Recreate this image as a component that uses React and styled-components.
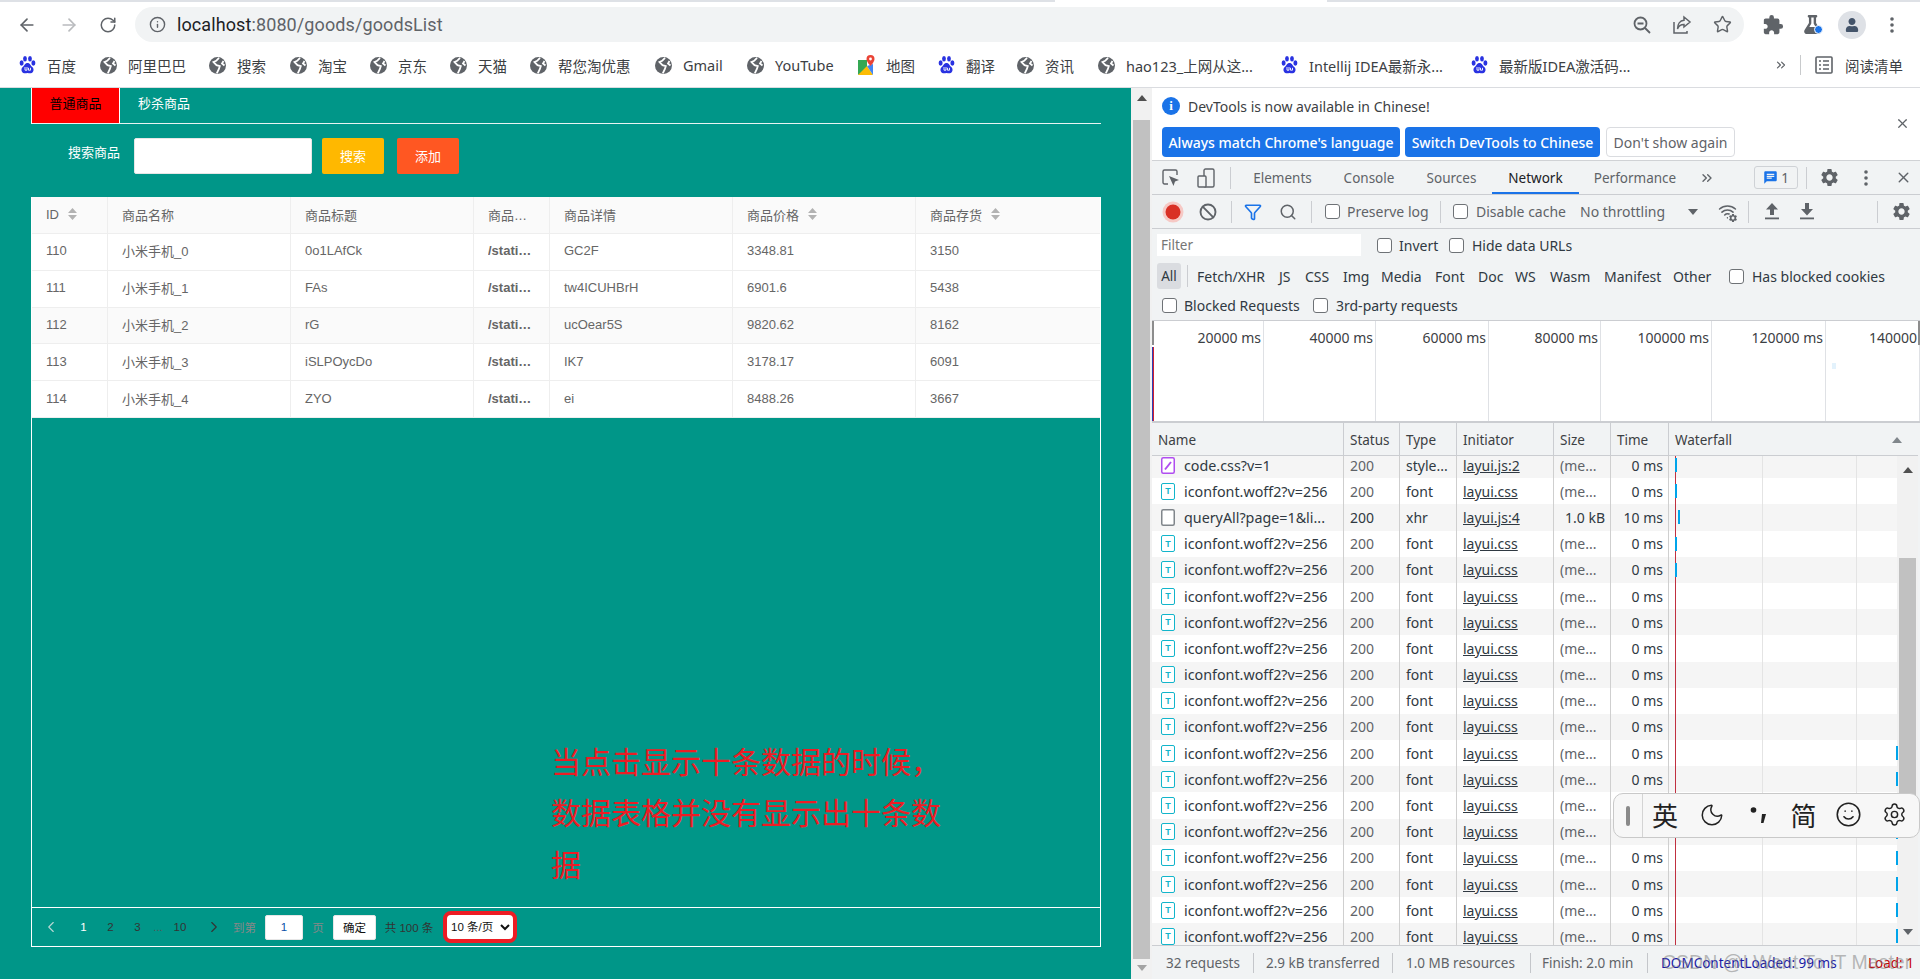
import React from 'react';
import styled, { createGlobalStyle } from 'styled-components';
import { ArrowLeft, ArrowRight, RotateCw, Info, Star, Ban, Search, Filter, X, ChevronsRight, Moon, Smile, Settings, Wifi, ChevronLeft, ChevronRight } from 'lucide-react';
import { MdSettings, MdChat, MdExtension } from 'react-icons/md';
import { FaFlask, FaUser } from 'react-icons/fa';

const Global = createGlobalStyle`
  html, body { margin: 0; padding: 0; height: 979px; overflow: hidden; background: #fff; }
  * { box-sizing: border-box; }
  body { font-family: "Noto Sans", "Noto Sans CJK SC", sans-serif; }
`;

const Shell = styled.div`width: 1920px; height: 979px; display: flex; flex-direction: column; overflow: hidden;`;

/* browser chrome */
const TabStrip = styled.div`height: 2px; background: #dee1e6; flex: none;`;
const ActiveTabEdge = styled.div`height: 2px; width: 272px; margin-left: 1055px; background: #fff;`;
const Toolbar = styled.div`height: 41px; flex: none; display: flex; align-items: center; padding: 5px 8px 1px 6px;`;
const Slot = styled.div`width: ${p => p.$w}px; flex: none; display: flex; align-items: center; justify-content: center; color: ${p => p.$c || '#5f6368'}; position: relative; padding-left: ${p => p.$pl || 0}px;`;
const Omnibox = styled.div`flex: 1; height: 35px; margin: 0 9px; background: #f1f3f4; border-radius: 18px; display: flex; align-items: center; padding-left: 14px;`;
const Url = styled.div`flex: 1; margin-left: 11px; font: 18px Roboto, sans-serif; color: #5f6368; white-space: nowrap; letter-spacing: .1px; b { font-weight: 400; color: #202124; }`;
const Dot = styled.span`position: absolute; right: 9px; bottom: 0; width: 9px; height: 9px; border-radius: 50%; background: #1a73e8; border: 1px solid #fff;`;
const Avatar = styled.div`width: 28px; height: 28px; border-radius: 50%; background: #dee1e6; display: flex; align-items: center; justify-content: center; color: #44546a;`;
const Bookmarks = styled.div`height: 45px; flex: none; display: flex; align-items: center; padding: 0 17px 0 19px; border-bottom: 1px solid #dadce0; font-size: 14.5px; color: #3c4043;`;
const Bookmark = styled.div`width: ${p => p.$w}px; flex: none; display: flex; align-items: center; gap: 11px; white-space: nowrap;`;
const BarEnd = styled.div`margin-left: auto; display: flex; align-items: center; color: #5f6368;`;
const BarDivider = styled.div`width: 1px; height: 20px; background: #c8cacc; margin: 0 14px 0 12px;`;
const ReadingList = styled.div`display: flex; align-items: center; gap: 12px; color: #3c4043;`;

/* main */
const Main = styled.div`flex: 1; min-height: 0; display: flex;`;
const Page = styled.div`width: 1131px; flex: none; background: #009688; padding-left: 31px; display: flex; flex-direction: column; font-family: "Liberation Sans", "Noto Sans CJK SC", sans-serif; font-size: 13px; color: #666;`;
const PageTabs = styled.div`width: 1070px; height: 36px; flex: none; display: flex; border-bottom: 1px solid #e8f3f2; border-left: 1px solid #fff;`;
const PageTab = styled.div`width: ${p => p.$w}px; height: 35px; padding-bottom: 6px; display: flex; align-items: center; justify-content: center; background: ${p => p.$on ? '#f00' : 'transparent'}; color: ${p => p.$on ? '#000' : '#fff'}; border-right: ${p => p.$on ? '1px solid #fff' : 'none'};`;
const SearchRow = styled.div`height: 73px; flex: none; padding-top: 14px; display: flex; align-items: flex-start;`;
const SearchLabel = styled.label`width: 89px; margin-right: 14px; text-align: right; color: #fff; line-height: 30px;`;
const SearchInput = styled.input`width: 178px; height: 36px; margin: 0 10px 0 0; border: 1px solid #e6e6e6; border-radius: 2px; background: #fff; outline: none;`;
const ActionButton = styled.button`width: 62px; height: 36px; margin-right: 13px; padding: 0 0 2px; border: 0; border-radius: 2px; background: ${p => p.$bg}; color: #fff; font: inherit;`;
const TableBox = styled.div`width: 1070px; height: 750px; flex: none; display: flex; flex-direction: column; border: 1px solid #fff; border-top: 0;`;
const GridRow = styled.div`display: grid; height: ${p => p.$h || 36.8}px; flex: none; grid-template-columns: 76px 183px 183px 76px 183px 183px 1fr; background: ${p => p.$alt ? '#fafafa' : '#fff'}; border-bottom: 1px solid #eee;`;
const Cell = styled.div`display: flex; align-items: center; gap: 9px; padding: 0 14px 2px; min-width: 0; border-right: 1px solid #eee; font-weight: ${p => p.$bold ? 700 : 400}; white-space: nowrap; &:last-child { border-right: 0; }`;
const Clip = styled.span`overflow: hidden; text-overflow: ellipsis;`;
const TableEmpty = styled.div`flex: 1; padding: 317px 0 0 519px; min-height: 0;`;
const Note = styled.div`width: 395px; font-size: 30px; line-height: 51.5px; color: #ed1c24; font-family: "Noto Sans CJK SC", sans-serif;`;
const Pager = styled.div`height: 39px; flex: none; border-top: 1px solid #fff; display: flex; align-items: center; font-size: 11.5px; color: #333;`;
const PagerCell = styled.div`width: ${p => p.$w}px; flex: none; display: flex; justify-content: ${p => p.$start ? 'flex-start' : 'center'}; align-items: center; color: ${p => p.$c || '#333'}; margin-left: ${p => p.$ml || 0}px; white-space: nowrap;`;
const PagerInput = styled.input`width: 38px; height: 25px; margin-left: 9px; border: 1px solid #e6e6e6; border-radius: 2px; text-align: center; font: inherit; color: #0b4fa8; background: #fff;`;
const PagerButton = styled.button`width: 43px; height: 25px; border: 1px solid #e6e6e6; border-radius: 2px; background: #fff; color: #111; font: inherit; padding: 0;`;
const PageSelect = styled.select`width: 74px; height: 32px; margin: 0 0 0 10px; border: 4px solid #ed1c24; border-radius: 8px; background: #fff; color: #111; font: 11.5px "Liberation Sans", "Noto Sans CJK SC", sans-serif; padding: 0;`;

const PageScroll = styled.div`width: 21px; flex: none; background: #f1f1f1; display: flex; flex-direction: column; align-items: center; padding: 7px 2px 0 2px;`;
const ArrowUp = styled.i`display: block; flex: none; width: 0; height: 0; border: 5px solid transparent; border-top: 0; border-bottom: 6px solid ${p => p.$c || '#505050'}; `;
const ArrowDown = styled.i`display: block; flex: none; width: 0; height: 0; border: 5px solid transparent; border-bottom: 0; border-top: 6px solid ${p => p.$c || '#a3a3a3'}; `;
const PageThumb = styled.div`width: 17px; height: 839px; margin-top: 19px; background: #c1c1c1; flex: none; margin-bottom: 6px;`;

/* devtools */
const Dev = styled.div`flex: 1; min-width: 0; position: relative; display: flex; flex-direction: column; font-size: 13.5px; color: #303942; background: #f1f3f4;`;
const InfoBar = styled.div`height: 73px; flex: none; background: #fff; border-bottom: 1px solid #d0d2d5; padding: 8px 0 0 10px; position: relative;`;
const InfoLine = styled.div`display: flex; align-items: center; gap: 8px; height: 20px; font-size: 14px; color: #3c4043;`;
const InfoDot = styled.div`width: 18px; height: 18px; border-radius: 50%; background: #1a73e8; color: #fff; font: bold 13px "Liberation Serif", serif; display: flex; align-items: center; justify-content: center;`;
const InfoButtons = styled.div`display: flex; gap: 5px; margin-top: 11px;`;
const InfoBtn = styled.div`width: ${p => p.$w}px; height: 30px; border-radius: 4px; display: flex; align-items: center; justify-content: center; white-space: nowrap; font-size: 14px; font-weight: ${p => p.$plain ? 400 : 500}; background: ${p => p.$plain ? '#fff' : '#1a73e8'}; color: ${p => p.$plain ? '#5f6368' : '#fff'}; border: ${p => p.$plain ? '1px solid #dadce0' : '0'}; margin-left: ${p => p.$plain ? 1 : 0}px;`;
const InfoClose = styled.div`position: absolute; right: 10px; top: 28px; color: #5f6368; display: flex;`;
const Bar = styled.div`height: ${p => p.$h}px; flex: none; display: flex; align-items: center; padding-left: ${p => p.$pl || 0}px; border-bottom: ${p => p.$line ? '1px solid #cbcdd1' : 'none'}; white-space: nowrap;`;
const VDivider = styled.div`width: 1px; height: 22px; flex: none; background: #cbcdd1; margin-left: ${p => p.$ml || 0}px; margin-right: ${p => p.$mr || 0}px;`;
const DevTab = styled.div`width: ${p => p.$w}px; flex: none; height: 100%; display: flex; align-items: center; justify-content: center; color: ${p => p.$on ? '#202124' : '#5f6368'}; border-bottom: ${p => p.$on ? '2px solid #1a73e8' : '0'}; padding-top: ${p => p.$on ? 2 : 0}px;`;
const IssueBtn = styled.div`width: 44px; height: 23px; margin-left: auto; border: 1px solid #cfd2d6; border-radius: 3px; display: flex; align-items: center; justify-content: center; gap: 3px; color: #5f6368;`;
const Check = styled.input.attrs({ type: 'checkbox', readOnly: true })`appearance: none; width: 15px; height: 15px; margin: 0 ${p => p.$mr ?? 7}px 0 ${p => p.$ml ?? 0}px; flex: none; background: #fff; border: 1px solid #6e7276; border-radius: 3px;`;
const Text = styled.span`flex: none; width: ${p => p.$w ? p.$w + 'px' : 'auto'}; font-size: 14px; color: ${p => p.$c || '#303942'}; margin-left: ${p => p.$ml || 0}px;`;
const FilterInput = styled.div`width: 204px; height: 22px; flex: none; background: #fff; color: #757575; padding-left: 4px; line-height: 22px; margin-right: 16px;`;
const AllChip = styled.div`width: 24px; height: 26px; flex: none; background: #dadce0; border-radius: 3px; display: flex; align-items: center; justify-content: center;`;
const Timeline = styled.div`height: 103px; flex: none; background: #fff; display: flex; position: relative; border-bottom: 2px solid #cbcdd1; border-top: 1px solid #cbcdd1;`;
const Tick = styled.div`width: ${p => p.$w}px; flex: none; border-right: 1px solid #dfe1e5; text-align: right; padding: 7px 2px 0 0; font-size: 14px; color: #3c4043; white-space: nowrap; overflow: hidden; &:last-of-type { border-right: 0; flex: 1; padding-right: 8px; }`;
const HandleL = styled.div`position: absolute; left: 0; top: 0; width: 2px; height: 24px; background: #8d8d8d;`;
const HandleR = styled.div`position: absolute; right: 0; top: 0; width: 2px; height: 24px; background: #8d8d8d;`;
const LoadMark = styled.div`position: absolute; left: 0; top: 26px; bottom: 0; width: 2px; background: linear-gradient(90deg, #2f3fb5 50%, #d02030 50%);`;
const Speck = styled.div`position: absolute; left: 680px; top: 42px; width: 4px; height: 6px; background: #e3f2fc;`;
const Head = styled.div`height: 33px; flex: none; margin-right: 2px; display: grid; grid-template-columns: 192px 56px 57px 97px 57px 58px 1fr; border-bottom: 1px solid #cbcdd1; background: #f1f3f4;`;
const HeadCell = styled.div`display: flex; align-items: center; justify-content: space-between; padding: 1px 16px 0 6px; border-right: 1px solid #cbcdd1; color: #3c4043; &:last-child { border-right: 0; }`;
const Body = styled.div`flex: 1; min-height: 0; margin-right: 2px; display: flex; background: #fff; overflow: hidden;`;
const Rows = styled.div`flex: 1; min-width: 0; margin-top: -4px;`;
const Row = styled.div`height: 26.2px; display: grid; grid-template-columns: 192px 56px 57px 97px 57px 58px 1fr; background: ${p => p.$alt ? '#f5f5f5' : '#fff'};`;
const Td = styled.div`display: flex; align-items: center; justify-content: ${p => p.$right ? 'flex-end' : 'flex-start'}; gap: 9px; padding: 0 5px 0 6px; border-right: 1px solid #cfcfcf; overflow: hidden; white-space: nowrap; font-size: ${p => p.$fs || 14}px; color: ${p => p.$c || '#303942'}; text-decoration: ${p => p.$u ? 'underline' : 'none'};`;
const FileIcon = styled.span`width: 14px; height: 17px; margin-left: 3px; flex: none; border: 1.5px solid ${p => p.$c}; border-radius: 2px; color: ${p => p.$c}; font: bold 9px "Liberation Sans", sans-serif; display: flex; align-items: center; justify-content: center; background: #fff;`;
const Fall = styled.div`position: relative; background-image: linear-gradient(#e4e4e4, #e4e4e4), linear-gradient(#e4e4e4, #e4e4e4), linear-gradient(#c03040, #c03040); background-size: 1px 100%, 1px 100%, 1px 100%; background-repeat: no-repeat; background-position: 93px 0, 187px 0, 6px 0;`;
const WaterBar = styled.span`position: absolute; left: ${p => p.$x}px; top: 6px; width: 2px; height: 14px; background: #00a4ea;`;
const DevScroll = styled.div`width: 21px; flex: none; background: #f1f1f1; display: flex; flex-direction: column; align-items: center; padding: 11px 0 10px;`;
const DevThumb = styled.div`width: 17px; height: 277px; margin-top: 85px; background: #c1c1c1; flex: none;`;
const Footer = styled.div`height: 34px; flex: none; display: flex; align-items: center; border-top: 1px solid #cbcdd1; background: #f1f3f4; font-size: 13.5px; color: #5f6368; position: relative;`;
const Stat = styled.div`width: ${p => p.$w}px; flex: none; height: 20px; line-height: 20px; padding-left: ${p => p.$pl}px; border-right: ${p => p.$nl ? '0' : '1px solid #c4c6ca'}; color: ${p => p.$c || '#5f6368'}; white-space: nowrap; overflow: hidden;`;
const Watermark = styled.div`position: absolute; left: 510px; top: 5px; font: 19.5px "Liberation Sans", sans-serif; color: rgba(120,120,120,.5); white-space: nowrap; pointer-events: none;`;
const Ime = styled.div`position: absolute; left: 461px; top: 705px; width: 307px; height: 45px; background: #f7f7f7; border: 1px solid #c9c9c9; border-radius: 10px; display: flex; align-items: center; color: #222;`;
const ImeGrip = styled.div`width: 29px; height: 100%; flex: none; display: flex; align-items: center; justify-content: center; border-right: 1px solid #d4d4d4; &::before { content: ""; width: 4px; height: 20px; border-radius: 2px; background: #8a8a8a; }`;
const ImeSlot = styled.div`width: ${p => p.$w}px; flex: none; display: flex; justify-content: center; align-items: center; padding-bottom: 2px; font: 26px "Noto Sans CJK SC", sans-serif;`;
const WifiGear = styled.span`position: absolute; right: 10px; bottom: -2px; display: flex; background: #f1f3f4; border-radius: 50%;`;

/* small drawings */
const Paw = () => (
  <svg width="17" height="18" viewBox="0 0 17 18" fill="#2932e1">
    <ellipse cx="2.6" cy="7" rx="2" ry="2.7" /><ellipse cx="6" cy="2.8" rx="1.9" ry="2.7" /><ellipse cx="11" cy="2.8" rx="1.9" ry="2.7" /><ellipse cx="14.4" cy="7" rx="2" ry="2.7" />
    <path d="M8.5 7C6 7 5.7 9.4 4 10.8 2.4 12.2 2 14 3 15.8c1 1.8 3 1.8 5.5 1.2 2.5.6 4.5.6 5.5-1.2 1-1.8.6-3.6-1-5C11.3 9.4 11 7 8.5 7z" />
    <path d="M6 11v3.2h2V11M9.5 11.8v2.4h2v-2.4" stroke="#fff" strokeWidth=".9" fill="none" />
  </svg>
);
const Globe = () => (
  <svg width="17" height="17" viewBox="0 0 17 17">
    <circle cx="8.5" cy="8.5" r="8.5" fill="#5f6368" />
    <path d="M10 .8 7.200 3.800 4.500 5l3 3.200 3.300 1-1 3-2 4.200M14.500 4l-1.500 2.500 2.500 2" stroke="#fff" strokeWidth="1.8" fill="none" />
  </svg>
);
const Maps = () => (
  <svg width="17" height="20" viewBox="0 0 17 20">
    <path d="M0 5h9v9L0 20z" fill="#34a853" /><path d="M0 20 9 11l6 9z" fill="#fbbc04" /><path d="M9 11l6 9V9z" fill="#4285f4" />
    <path d="M12.500 0a4 4 0 0 0-4 4c0 3 4 7 4 7s4-4 4-7a4 4 0 0 0-4-4z" fill="#ea4335" /><circle cx="12.5" cy="4" r="1.4" fill="#fff" />
  </svg>
);
const ZoomOutIcon = () => (
  <svg width="20" height="20" viewBox="0 0 20 20" fill="none" stroke="#5f6368" strokeWidth="1.8"><circle cx="8.5" cy="8.5" r="6" /><path d="M5.500 8.500h6M13 13l5 5" /></svg>
);
const ShareIcon = () => (
  <svg width="20" height="20" viewBox="0 0 20 20" fill="none" stroke="#5f6368" strokeWidth="1.5"><path d="M2 7v11h13v-2" /><path d="M12 2l6 5-6 5V9.500C8.500 9.500 6.500 11 5.500 14c0-5 2.500-8.500 6.500-8.800z" /></svg>
);
const Dots = ({ c = '#5f6368' }) => (
  <svg width="4" height="16" viewBox="0 0 4 16" fill={c}><circle cx="2" cy="2" r="1.8" /><circle cx="2" cy="8" r="1.8" /><circle cx="2" cy="14" r="1.8" /></svg>
);
const ListIcon = () => (
  <svg width="18" height="18" viewBox="0 0 18 18" fill="none" stroke="#5f6368" strokeWidth="1.6"><rect x="1" y="1" width="16" height="16" rx="1" /><path d="M4 5h2M8 5h6M4 9h2M8 9h6M4 13h2M8 13h6" /></svg>
);
const Inspect = () => (
  <svg width="18" height="18" viewBox="0 0 18 18" fill="none" stroke="#5f6368" strokeWidth="1.4"><path d="M6 15H2.500A1.500 1.500 0 0 1 1 13.500v-11A1.500 1.500 0 0 1 2.500 1h11A1.500 1.500 0 0 1 15 2.500V6" /><path d="M7 7l10 4-4 1.500L11.500 17z" fill="#5f6368" stroke="none" /></svg>
);
const Device = () => (
  <svg width="18" height="20" viewBox="0 0 18 20" fill="none" stroke="#5f6368" strokeWidth="1.4"><rect x="7" y="1" width="10" height="18" rx="1.5" /><rect x="1" y="8" width="8" height="11" rx="1" fill="#f1f3f4" /></svg>
);
const Record = () => (
  <svg width="22" height="22" viewBox="0 0 22 22"><circle cx="11" cy="11" r="10.5" fill="#f6c9c5" /><circle cx="11" cy="11" r="7.5" fill="#d93025" /></svg>
);
const Up = () => (
  <svg width="14" height="17" viewBox="0 0 14 17" fill="#5f6368"><path d="M7 0l6 6.500H9V12H5V6.500H1z" /><rect x="0" y="14.5" width="14" height="1.8" /></svg>
);
const Down = () => (
  <svg width="14" height="17" viewBox="0 0 14 17" fill="#5f6368"><path d="M7 12.500 1 6h4V0h4v6h4z" /><rect x="0" y="14.5" width="14" height="1.8" /></svg>
);
const Sort = () => (
  <svg width="9" height="12" viewBox="0 0 9 12" fill="#b2b2b2"><path d="M4.500 0 9 5H0zM0 7h9l-4.500 5z" /></svg>
);
const Pencil = () => (
  <svg width="14" height="17" viewBox="0 0 14 17" fill="none" style={{ marginLeft: 3, flex: 'none' }}><rect x=".75" y=".75" width="12.5" height="15.5" rx="1.5" stroke="#b04df0" strokeWidth="1.5" fill="#fff" /><path d="M4 12.500 10 5" stroke="#b04df0" strokeWidth="2" /></svg>
);
const BlankFile = () => (
  <svg width="14" height="17" viewBox="0 0 14 17" fill="none" style={{ marginLeft: 3, flex: 'none' }}><rect x=".75" y=".75" width="12.5" height="15.5" rx="1.5" stroke="#80868b" strokeWidth="1.5" fill="#fff" /></svg>
);
const Comma = () => (
  <svg width="18" height="22" viewBox="0 0 18 22" fill="#222"><circle cx="3.5" cy="6" r="2.8" /><path d="M12 10h4l-2.500 9H11z" /></svg>
);

const marks = [
  ['百度', 81, <Paw />], ['阿里巴巴', 109, <Globe />], ['搜索', 81, <Globe />], ['淘宝', 80, <Globe />], ['京东', 80, <Globe />],
  ['天猫', 80, <Globe />], ['帮您淘优惠', 125, <Globe />], ['Gmail', 92, <Globe />], ['YouTube', 111, <Globe />], ['地图', 80, <Maps />],
  ['翻译', 79, <Paw />], ['资讯', 81, <Globe />], ['hao123_上网从这...', 183, <Globe />], ['Intellij IDEA最新永...', 190, <Paw />], ['最新版IDEA激活码...', 180, <Paw />],
];

const goods = [
  ['110', '小米手机_0', '0o1LAfCk', 'GC2F', '3348.81', '3150'],
  ['111', '小米手机_1', 'FAs', 'tw4ICUHBrH', '6901.6', '5438'],
  ['112', '小米手机_2', 'rG', 'ucOear5S', '9820.62', '8162'],
  ['113', '小米手机_3', 'iSLPOycDo', 'IK7', '3178.17', '6091'],
  ['114', '小米手机_4', 'ZYO', 'ei', '8488.26', '3667'],
];

const requests = Array.from({ length: 19 }, (_, i) => {
  if (i === 0) return { n: 'code.css?v=1', k: 'css', t: 'style...', by: 'layui.js:2', s: '(me...', ms: '0 ms', bar: 6 };
  if (i === 2) return { n: 'queryAll?page=1&li...', k: 'xhr', t: 'xhr', by: 'layui.js:4', s: '1.0 kB', ms: '10 ms', bar: 9, dark: true };
  return { n: 'iconfont.woff2?v=256', k: 'font', t: 'font', by: 'layui.css', s: '(me...', ms: '0 ms', bar: i < 5 ? 6 : i >= 11 ? 227 : null };
});

const ticks = [['20000 ms', 112], ['40000 ms', 112], ['60000 ms', 113], ['80000 ms', 112], ['100000 ms', 111], ['120000 ms', 114], ['140000', 94]];
const tabs = [['Elements', 89], ['Console', 84], ['Sources', 81], ['Network', 87, true], ['Performance', 112]];
const kinds = [['Fetch/XHR', 82], ['JS', 26], ['CSS', 38], ['Img', 38], ['Media', 54], ['Font', 43], ['Doc', 37], ['WS', 35], ['Wasm', 54], ['Manifest', 69], ['Other', 56]];

export default function App() {
  return (
    <Shell>
      <Global />
      <TabStrip><ActiveTabEdge /></TabStrip>
      <Toolbar>
        <Slot $w={42}><ArrowLeft size={20} /></Slot>
        <Slot $w={42} $c="#b9bbbe"><ArrowRight size={20} /></Slot>
        <Slot $w={36}><RotateCw size={18} /></Slot>
        <Omnibox>
          <Info size={17} color="#5f6368" />
          <Url><b>localhost</b>:8080/goods/goodsList</Url>
          <Slot $w={40}><ZoomOutIcon /></Slot>
          <Slot $w={40}><ShareIcon /></Slot>
          <Slot $w={40}><Star size={19} strokeWidth={1.8} /></Slot>
          <Slot $w={2} />
        </Omnibox>
        <Slot $w={39}><MdExtension size={22} /></Slot>
        <Slot $w={40}><FaFlask size={19} /><Dot /></Slot>
        <Slot $w={40}><Avatar><FaUser size={14} /></Avatar></Slot>
        <Slot $w={40}><Dots /></Slot>
      </Toolbar>
      <Bookmarks>
        {marks.map(([t, w, icon]) => <Bookmark key={t} $w={w}>{icon}<span>{t}</span></Bookmark>)}
        <BarEnd>
          <ChevronsRight size={14} />
          <BarDivider />
          <ReadingList><ListIcon /><span>阅读清单</span></ReadingList>
        </BarEnd>
      </Bookmarks>
      <Main>
        <Page>
          <PageTabs>
            <PageTab $w={88} $on>普通商品</PageTab>
            <PageTab $w={88}>秒杀商品</PageTab>
          </PageTabs>
          <SearchRow>
            <SearchLabel>搜索商品</SearchLabel>
            <SearchInput />
            <ActionButton $bg="#FFB800">搜索</ActionButton>
            <ActionButton $bg="#FF5722">添加</ActionButton>
          </SearchRow>
          <TableBox>
            <GridRow $alt $h={37}>
              <Cell>ID <Sort /></Cell>
              <Cell>商品名称</Cell>
              <Cell>商品标题</Cell>
              <Cell><Clip>商品图片地址</Clip></Cell>
              <Cell>商品详情</Cell>
              <Cell>商品价格 <Sort /></Cell>
              <Cell>商品存货 <Sort /></Cell>
            </GridRow>
            {goods.map((g, i) => (
              <GridRow key={g[0]} $alt={i === 2}>
                <Cell>{g[0]}</Cell>
                <Cell>{g[1]}</Cell>
                <Cell>{g[2]}</Cell>
                <Cell $bold><Clip>/static/img/xiaomi.png</Clip></Cell>
                <Cell>{g[3]}</Cell>
                <Cell>{g[4]}</Cell>
                <Cell>{g[5]}</Cell>
              </GridRow>
            ))}
            <TableEmpty>
              <Note>当点击显示十条数据的时候，数据表格并没有显示出十条数据</Note>
            </TableEmpty>
            <Pager>
              <PagerCell $w={38} $c="#b9d8d4"><ChevronLeft size={18} strokeWidth={1.5} /></PagerCell>
              <PagerCell $w={27} $c="#fff">1</PagerCell>
              <PagerCell $w={27}>2</PagerCell>
              <PagerCell $w={27}>3</PagerCell>
              <PagerCell $w={14} $c="#555">...</PagerCell>
              <PagerCell $w={30}>10</PagerCell>
              <PagerCell $w={38}><ChevronRight size={18} strokeWidth={1.5} /></PagerCell>
              <PagerCell $w={23} $c="#888">到第</PagerCell>
              <PagerInput defaultValue="1" />
              <PagerCell $w={30} $c="#888">页</PagerCell>
              <PagerButton>确定</PagerButton>
              <PagerCell $w={48} $ml={9}>共 100 条</PagerCell>
              <PageSelect defaultValue="10"><option value="10">10 条/页</option></PageSelect>
            </Pager>
          </TableBox>
        </Page>
        <PageScroll>
          <ArrowUp />
          <PageThumb />
          <ArrowDown />
        </PageScroll>
        <Dev>
          <InfoBar>
            <InfoLine><InfoDot>i</InfoDot><span>DevTools is now available in Chinese!</span></InfoLine>
            <InfoButtons>
              <InfoBtn $w={238}>Always match Chrome's language</InfoBtn>
              <InfoBtn $w={195}>Switch DevTools to Chinese</InfoBtn>
              <InfoBtn $w={129} $plain>Don't show again</InfoBtn>
            </InfoButtons>
            <InfoClose><X size={15} /></InfoClose>
          </InfoBar>
          <Bar $h={34} $line>
            <Slot $w={38}><Inspect /></Slot>
            <Slot $w={32}><Device /></Slot>
            <VDivider $ml={8} $mr={7} />
            {tabs.map(([t, w, on]) => <DevTab key={t} $w={w} $on={on}>{t}</DevTab>)}
            <Slot $w={32}><ChevronsRight size={16} /></Slot>
            <IssueBtn><MdChat size={15} color="#1a73e8" /><span>1</span></IssueBtn>
            <VDivider $ml={8} />
            <Slot $w={44}><MdSettings size={21} /></Slot>
            <Slot $w={30}><Dots /></Slot>
            <Slot $w={39} $pl={5}><X size={17} /></Slot>
          </Bar>
          <Bar $h={34} $line>
            <Slot $w={42}><Record /></Slot>
            <Slot $w={28}><Ban size={18} strokeWidth={2.5} /></Slot>
            <VDivider $ml={9} />
            <Slot $w={42}><Filter size={18} color="#1a73e8" strokeWidth={2.2} /></Slot>
            <Slot $w={28}><Search size={18} /></Slot>
            <VDivider $ml={9} $mr={13} />
            <Check />
            <Text $w={93} $c="#5f6368">Preserve log</Text>
            <VDivider $mr={12} />
            <Check $mr={8} />
            <Text $w={104} $c="#5f6368">Disable cache</Text>
            <Text $w={108} $c="#5f6368">No throttling</Text>
            <ArrowDown $c="#5f6368" />
            <Slot $w={50} $pl={8}><Wifi size={19} /><WifiGear><MdSettings size={10} /></WifiGear></Slot>
            <VDivider />
            <Slot $w={46}><Up /></Slot>
            <Slot $w={24}><Down /></Slot>
            <VDivider $ml={58} />
            <Slot $w={46}><MdSettings size={21} /></Slot>
          </Bar>
          <Bar $h={32} $pl={5}>
            <FilterInput>Filter</FilterInput>
            <Check />
            <Text $w={50}>Invert</Text>
            <Check $mr={8} />
            <Text>Hide data URLs</Text>
          </Bar>
          <Bar $h={30} $pl={5}>
            <AllChip>All</AllChip>
            <VDivider $ml={6} $mr={9} />
            {kinds.map(([t, w]) => <Text key={t} $w={w}>{t}</Text>)}
            <Check $mr={8} />
            <Text>Has blocked cookies</Text>
          </Bar>
          <Bar $h={29} $pl={10}>
            <Check />
            <Text $w={129}>Blocked Requests</Text>
            <Check $mr={8} />
            <Text>3rd-party requests</Text>
          </Bar>
          <Timeline>
            {ticks.map(([t, w]) => <Tick key={t} $w={w}>{t}</Tick>)}
            <HandleL />
            <HandleR />
            <LoadMark />
            <Speck />
          </Timeline>
          <Head>
            <HeadCell>Name</HeadCell>
            <HeadCell>Status</HeadCell>
            <HeadCell>Type</HeadCell>
            <HeadCell>Initiator</HeadCell>
            <HeadCell>Size</HeadCell>
            <HeadCell>Time</HeadCell>
            <HeadCell>Waterfall<ArrowUp $c="#80868b" /></HeadCell>
          </Head>
          <Body>
            <Rows>
              {requests.map((r, i) => (
                <Row key={i} $alt={i % 2 === 0}>
                  <Td $fs={14.3}>
                    {r.k === 'css' && <Pencil />}
                    {r.k === 'xhr' && <BlankFile />}
                    {r.k === 'font' && <FileIcon $c="#12b5cb">T</FileIcon>}
                    <span>{r.n}</span>
                  </Td>
                  <Td $c={r.dark ? '#303942' : '#5f6368'}>200</Td>
                  <Td>{r.t}</Td>
                  <Td $u>{r.by}</Td>
                  <Td $right={r.dark} $c={r.dark ? '#303942' : '#5f6368'}>{r.s}</Td>
                  <Td $right>{r.ms}</Td>
                  <Fall>{r.bar !== null && <WaterBar $x={r.bar} />}</Fall>
                </Row>
              ))}
            </Rows>
            <DevScroll>
              <ArrowUp />
              <DevThumb />
              <ArrowDown $c="#5f6368" style={{ marginTop: 'auto' }} />
            </DevScroll>
          </Body>
          <Footer>
            <Stat $w={102} $pl={14}>32 requests</Stat>
            <Stat $w={139} $pl={12}>2.9 kB transferred</Stat>
            <Stat $w={138} $pl={13}>1.0 MB resources</Stat>
            <Stat $w={117} $pl={11}>Finish: 2.0 min</Stat>
            <Stat $w={220} $pl={13} $c="#1a1aa6" $nl>DOMContentLoaded: 99 ms</Stat>
            <Stat $w={50} $pl={0} $c="#c80000" $nl>Load: 1</Stat>
            <Watermark>CSDN @I Want To IT Master</Watermark>
          </Footer>
          <Ime>
            <ImeGrip />
            <ImeSlot $w={44}>英</ImeSlot>
            <ImeSlot $w={49}><Moon size={26} strokeWidth={1.4} /></ImeSlot>
            <ImeSlot $w={46}><Comma /></ImeSlot>
            <ImeSlot $w={43}>简</ImeSlot>
            <ImeSlot $w={46}><Smile size={27} strokeWidth={1.4} /></ImeSlot>
            <ImeSlot $w={46}><Settings size={25} strokeWidth={1.4} /></ImeSlot>
          </Ime>
        </Dev>
      </Main>
    </Shell>
  );
}
